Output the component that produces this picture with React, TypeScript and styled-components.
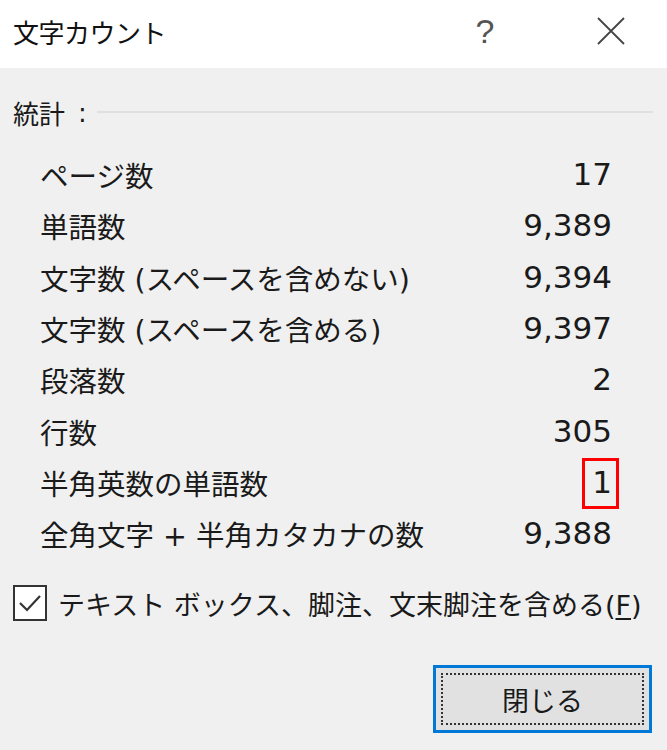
import { createGlobalStyle, styled } from "styled-components";

const GlobalStyle = createGlobalStyle`
  html, body {
    margin: 0;
    padding: 0;
    background: #f0f0f0;
  }
  body {
    font-family: "DejaVu Sans", "Noto Sans CJK JP", sans-serif;
    color: #1a1a1a;
  }
`;

const Dialog = styled.div`
  width: 667px;
  height: 750px;
  display: flex;
  flex-direction: column;
  background: #f0f0f0;
  overflow: hidden;
`;

const TitleBar = styled.div`
  height: 68px;
  flex: none;
  background: #ffffff;
  display: flex;
  align-items: center;
  padding: 0 0 6px 13px;
  box-sizing: border-box;
`;

const Title = styled.div`
  flex: 1;
  font-family: "Noto Sans CJK JP", sans-serif;
  font-size: 26px;
  color: #111;
  letter-spacing: -0.5px;
`;

const HelpButton = styled.div`
  width: 40px;
  font-family: "Liberation Sans", sans-serif;
  font-size: 34px;
  font-weight: 300;
  line-height: 1;
  color: #555;
  text-align: center;
  margin-right: 92px;
`;

const CloseButton = styled.div`
  width: 28px;
  height: 28px;
  margin-right: 42px;
  display: flex;
  align-items: center;
  justify-content: center;
`;

const Body = styled.div`
  flex: 1;
  display: flex;
  flex-direction: column;
  padding: 0 14px 0 13px;
`;

const GroupHeader = styled.div`
  margin-top: 29px;
  display: flex;
  align-items: center;
  height: 32px;
`;

const GroupLabel = styled.span`
  font-family: "Noto Sans CJK JP", sans-serif;
  font-size: 26px;
  line-height: 32px;
`;

const Colon = styled.span`
  font-size: 26px;
  margin-left: 13px;
  margin-right: 10px;
`;

const GroupLine = styled.div`
  flex: 1;
  height: 2px;
  background: #e0e0e0;
  margin-top: -2px;
`;

const StatsList = styled.div`
  margin-top: 20px;
  padding: 0 41px 0 27px;
  display: flex;
  flex-direction: column;
`;

const StatRow = styled.div`
  height: 51.3px;
  display: flex;
  align-items: center;
  justify-content: space-between;
  font-size: 28.5px;
`;

const Value = styled.span<{ $marked?: boolean }>`
  position: relative;
  line-height: 1;
  font-size: 31px;

  ${({ $marked }) =>
    $marked &&
    `
    &::after {
      content: "";
      position: absolute;
      top: -9px;
      bottom: -11px;
      left: -10px;
      right: -7px;
      border: 3px solid #ff0000;
    }
  `}
`;

const CheckRow = styled.label`
  margin-top: 26px;
  display: flex;
  align-items: center;
  gap: 11px;
  font-size: 27px;
  height: 36px;
`;

const CheckBox = styled.span`
  width: 34px;
  height: 36px;
  box-sizing: border-box;
  flex: none;
  background: #ffffff;
  border: 2px solid #333;
  display: flex;
  align-items: center;
  justify-content: center;
`;

const ButtonRow = styled.div`
  margin-top: 44px;
  display: flex;
  justify-content: flex-end;
  padding-right: 1px;
`;

const CloseDialogButton = styled.button`
  width: 219px;
  height: 68px;
  box-sizing: border-box;
  border: 3px solid #0078d7;
  background: #e1e1e1;
  padding: 5px;
  font-family: "Noto Sans CJK JP", sans-serif;
  font-size: 27px;
  color: #1a1a1a;
`;

const FocusRect = styled.span`
  display: flex;
  align-items: center;
  justify-content: center;
  height: 100%;
  border: 2px dotted #333;
  box-sizing: border-box;
`;

const Underline = styled.span`
  text-decoration: underline;
  text-underline-offset: 3px;
`;

const stats = [
  { label: "ページ数", value: "17" },
  { label: "単語数", value: "9,389" },
  { label: "文字数 (スペースを含めない)", value: "9,394" },
  { label: "文字数 (スペースを含める)", value: "9,397" },
  { label: "段落数", value: "2" },
  { label: "行数", value: "305" },
  { label: "半角英数の単語数", value: "1", marked: true },
  { label: "全角文字 + 半角カタカナの数", value: "9,388" },
];

export default function App() {
  return (
    <Dialog>
      <GlobalStyle />
      <TitleBar>
        <Title>文字カウント</Title>
        <HelpButton>?</HelpButton>
        <CloseButton>
          <svg width="28" height="28" viewBox="0 0 28 28">
            <path d="M1 1 L27 27 M27 1 L1 27" stroke="#444" strokeWidth="1.8" fill="none" />
          </svg>
        </CloseButton>
      </TitleBar>
      <Body>
        <GroupHeader>
          <GroupLabel>統計</GroupLabel>
          <Colon>:</Colon>
          <GroupLine />
        </GroupHeader>
        <StatsList>
          {stats.map((s) => (
            <StatRow key={s.label}>
              <span>{s.label}</span>
              <Value $marked={s.marked}>{s.value}</Value>
            </StatRow>
          ))}
        </StatsList>
        <CheckRow>
          <CheckBox>
            <svg width="26" height="20" viewBox="0 0 26 20">
              <path d="M3 10 L10 17 L23 3" stroke="#333" strokeWidth="2.2" fill="none" />
            </svg>
          </CheckBox>
          <span>
            テキスト ボックス、脚注、文末脚注を含める(<Underline>F</Underline>)
          </span>
        </CheckRow>
        <ButtonRow>
          <CloseDialogButton>
            <FocusRect>閉じる</FocusRect>
          </CloseDialogButton>
        </ButtonRow>
      </Body>
    </Dialog>
  );
}
